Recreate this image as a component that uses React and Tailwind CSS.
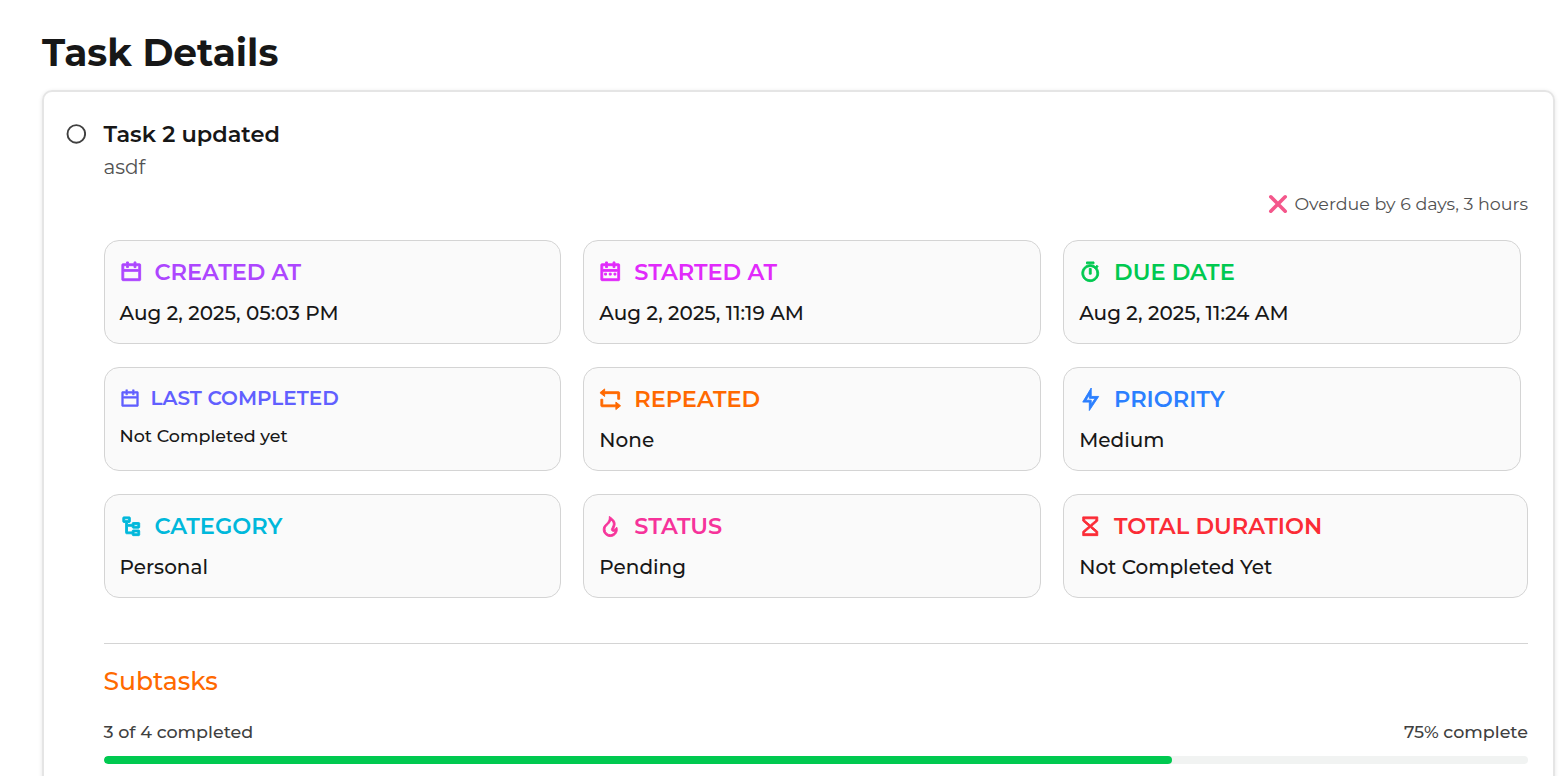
import {
  RiCalendarLine,
  RiCalendar2Line,
  RiTimerLine,
  RiRepeatLine,
  RiFlashlightLine,
  RiNodeTree,
  RiFireLine,
  RiHourglass2Line,
} from "react-icons/ri";

const DETAILS = [
  { label: "CREATED AT", value: "Aug 2, 2025, 05:03 PM", Icon: RiCalendarLine, color: "text-[#ad46ff]" },
  { label: "STARTED AT", value: "Aug 2, 2025, 11:19 AM", Icon: RiCalendar2Line, color: "text-[#e12afb]" },
  { label: "DUE DATE", value: "Aug 2, 2025, 11:24 AM", Icon: RiTimerLine, color: "text-[#00c950]" },
  { label: "LAST COMPLETED", value: "Not Completed yet", Icon: RiCalendarLine, color: "text-[#615fff]", compact: true },
  { label: "REPEATED", value: "None", Icon: RiRepeatLine, color: "text-[#ff6900]" },
  { label: "PRIORITY", value: "Medium", Icon: RiFlashlightLine, color: "text-[#2b7fff]" },
  { label: "CATEGORY", value: "Personal", Icon: RiNodeTree, color: "text-[#00b8db]" },
  { label: "STATUS", value: "Pending", Icon: RiFireLine, color: "text-[#f6339a]" },
  { label: "TOTAL DURATION", value: "Not Completed Yet", Icon: RiHourglass2Line, color: "text-[#fb2c36]", last: true },
];

function DetailCard({ label, value, Icon, color, compact, last }) {
  return (
    <div
      className={`h-[104px] rounded-[15px] border border-[#d4d4d4] bg-[#fafafa] px-[15px] pt-[15px] ${last ? "" : "mr-[7px]"}`}
    >
      <div
        className={`flex items-center ${color} font-semibold ${
          compact ? "h-[30px] gap-[11px] text-[20px]" : "h-[33px] gap-[12.4px] text-[22.5px]"
        }`}
      >
        <Icon className={compact ? "mt-px shrink-0 stroke-current stroke-[0.7]" : "shrink-0 stroke-current stroke-1"} />
        <span>{label}</span>
      </div>
      <div
        className={`font-medium text-[#171717] ${
          compact ? "mt-[10px] text-[17.5px] leading-[25px]" : "mt-[9px] text-[20px] leading-[30px]"
        }`}
      >
        {value}
      </div>
    </div>
  );
}

function CrossMark() {
  return (
    <svg viewBox="0 0 20 20" className="mb-[2px] size-5 shrink-0" fill="none" stroke="#f4578b" strokeWidth="3.6" strokeLinecap="round">
      <path d="M2.8 2.8 17.2 17.2M17.2 2.8 2.8 17.2" />
    </svg>
  );
}

function Subtasks({ done, total }) {
  const percent = (done / total) * 100;
  return (
    <section className="mt-[45px] border-t border-[#d4d4d4] pt-5">
      <h3 className="text-[25px] leading-[35px] font-medium text-[#ff6900]">Subtasks</h3>
      <div className="mt-5 flex justify-between text-[17.5px] leading-[25px] font-medium text-[#404040]">
        <span>{done} of {total} completed</span>
        <span>{percent}% complete</span>
      </div>
      <div className="mt-[12px] h-2 overflow-hidden rounded-full bg-[#f1f3f2]">
        <div className="h-full rounded-full bg-[#00c950]" style={{ width: `${percent}%` }} />
      </div>
    </section>
  );
}

export default function App() {
  return (
    <main className="h-screen overflow-hidden bg-white pr-2 pl-[42px] font-['Montserrat','Open_Sans',sans-serif] text-[#171717]">
      <h1 className="pt-[30px] text-[37.5px] leading-[45px] font-bold">Task Details</h1>
      <article className="mt-[15px] h-[760px] rounded-[10px] border-2 border-[#e5e5e5] px-[22px] pt-[26px] pr-[25px] shadow-[0_1px_4px_rgba(0,0,0,0.1)]">
        <div className="flex gap-[17.5px]">
          <svg viewBox="0 0 20 20" className="mt-[6px] size-5 shrink-0 fill-none stroke-[#404040] stroke-[1.9]">
            <circle cx="10.3" cy="9.9" r="8.8" />
          </svg>
          <div className="min-w-0 flex-1">
            <h2 className="text-[22.5px] leading-[32px] font-semibold">Task 2 updated</h2>
            <p className="mt-[2px] text-[20px] leading-[30px] text-[#525252]">asdf</p>
            <div className="mt-[10px] flex h-[25px] items-center justify-end gap-[6px] text-[17.5px] text-[#525252]">
              <CrossMark />
              <span>Overdue by 6 days, 3 hours</span>
            </div>
            <div className="mt-[23px] grid grid-cols-3 gap-x-[15px] gap-y-[23px]">
              {DETAILS.map((item) => (
                <DetailCard key={item.label} {...item} />
              ))}
            </div>
            <Subtasks done={3} total={4} />
          </div>
        </div>
      </article>
    </main>
  );
}
